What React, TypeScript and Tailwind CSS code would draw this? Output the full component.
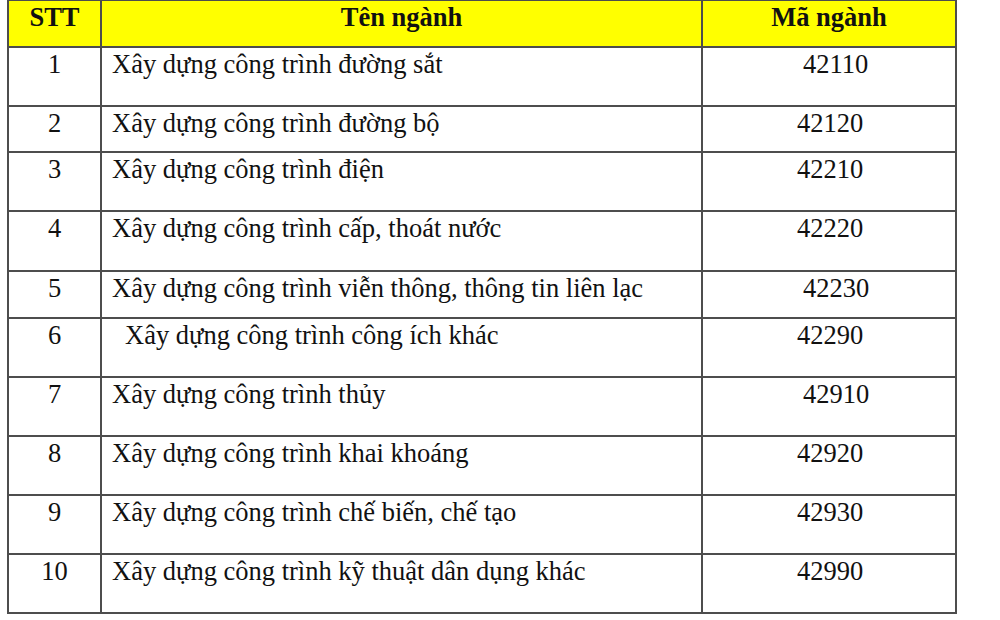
import React from "react";

const rows: { stt: string; name: string; code: string; h: string; nameCls: string; codeCls: string }[] = [
  { stt: "1", name: "Xây dựng công trình đường sắt", code: "42110", h: "h-[59px]", nameCls: "pl-[10px]", codeCls: "pl-[100px]" },
  { stt: "2", name: "Xây dựng công trình đường bộ", code: "42120", h: "h-[46px]", nameCls: "pl-[10px]", codeCls: "pl-[94px]" },
  { stt: "3", name: "Xây dựng công trình điện", code: "42210", h: "h-[59px]", nameCls: "pl-[10px]", codeCls: "pl-[94px]" },
  { stt: "4", name: "Xây dựng công trình cấp, thoát nước", code: "42220", h: "h-[60px]", nameCls: "pl-[10px]", codeCls: "pl-[94px]" },
  { stt: "5", name: "Xây dựng công trình viễn thông, thông tin liên lạc", code: "42230", h: "h-[47px]", nameCls: "pl-[10px]", codeCls: "pl-[100px]" },
  { stt: "6", name: "Xây dựng công trình công ích khác", code: "42290", h: "h-[59px]", nameCls: "pl-[23px]", codeCls: "pl-[94px]" },
  { stt: "7", name: "Xây dựng công trình thủy", code: "42910", h: "h-[59px]", nameCls: "pl-[10px]", codeCls: "pl-[100px]" },
  { stt: "8", name: "Xây dựng công trình khai khoáng", code: "42920", h: "h-[59px]", nameCls: "pl-[10px]", codeCls: "pl-[94px]" },
  { stt: "9", name: "Xây dựng công trình chế biến, chế tạo", code: "42930", h: "h-[59px]", nameCls: "pl-[10px]", codeCls: "pl-[94px]" },
  { stt: "10", name: "Xây dựng công trình kỹ thuật dân dụng khác", code: "42990", h: "h-[59px]", nameCls: "pl-[10px]", codeCls: "pl-[94px]" },
];

export default function App() {
  return (
    <div className="w-[1000px] h-[620px] bg-white overflow-hidden text-[#111]" style={{ fontFamily: '"Liberation Serif", "Times New Roman", serif' }}>
      <div className="ml-[7px] w-[950px] border-l-2 border-r-2 border-t border-[#4d4d4d]">
        <div className="flex h-[47px] bg-[#ffff00] border-b-2 border-[#4d4d4d] font-bold text-[26.5px] leading-[30px]">
          <div className="w-[93px] border-r-2 border-[#4d4d4d] text-center pt-[1px]">STT</div>
          <div className="w-[601px] border-r-2 border-[#4d4d4d] text-center pt-[1px]">Tên ngành</div>
          <div className="flex-1 text-center pt-[1px]">Mã ngành</div>
        </div>
        {rows.map((r) => (
          <div key={r.stt} className={`flex ${r.h} border-b-2 border-[#4d4d4d] text-[26.5px] leading-[30px]`}>
            <div className="w-[93px] border-r-2 border-[#4d4d4d] text-center pt-[1px]">{r.stt}</div>
            <div className={`w-[601px] border-r-2 border-[#4d4d4d] pt-[1px] ${r.nameCls}`}>{r.name}</div>
            <div className={`flex-1 pt-[1px] ${r.codeCls}`}>{r.code}</div>
          </div>
        ))}
      </div>
    </div>
  );
}
